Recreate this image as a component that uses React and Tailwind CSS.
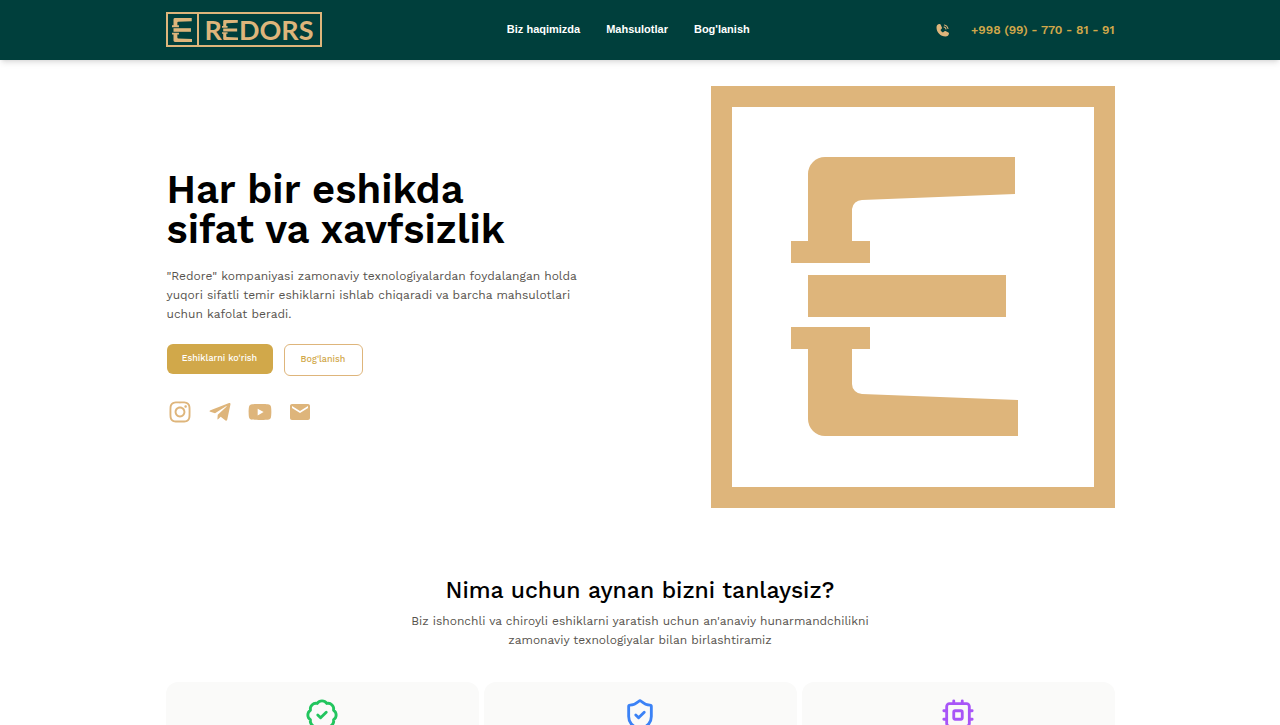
import React from "react";
import { BadgeCheck, ShieldCheck } from "lucide-react";
import { FaInstagram, FaTelegramPlane, FaYoutube } from "react-icons/fa";
import { MdEmail } from "react-icons/md";
import { PiPhoneCallFill } from "react-icons/pi";

function ClampMark(props) {
  return (
    <svg viewBox="80 70 227 280" fill="currentColor" aria-hidden="true" {...props}>
      <path d="M80 155h17V88a17 17 0 0 1 17-17H304v37L151 114a10 10 0 0 0-10 9v32h18v22H80Z" />
      <path d="M97 189h198v42H97Z" />
      <path d="M80 241h79v22h-18v35a10 10 0 0 0 10 10L307 314V350H114a17 17 0 0 1-17-17V263H80Z" />
    </svg>
  );
}

function Logo() {
  return (
    <a
      href="#"
      aria-label="Redors"
      className="flex h-[35px] w-[156px] border-2 border-[#deb57b] text-[#deb57b]"
    >
      <span className="flex w-[31px] items-center justify-center border-r-2 border-[#deb57b]">
        <ClampMark className="h-6 w-5" preserveAspectRatio="none" />
      </span>
      <span className="flex flex-1 items-center justify-center font-['Lato',sans-serif] text-[27px] leading-none font-bold">
        R
        <ClampMark className="mr-px h-5 w-4" preserveAspectRatio="none" />
        DORS
      </span>
    </a>
  );
}

function CpuIcon(props) {
  return (
    <svg
      viewBox="0 0 24 24"
      fill="none"
      stroke="currentColor"
      strokeWidth="2"
      strokeLinecap="round"
      strokeLinejoin="round"
      aria-hidden="true"
      {...props}
    >
      <rect x="4" y="4" width="16" height="16" rx="2" />
      <rect x="9" y="9" width="6" height="6" rx="1" />
      <path d="M15 2v2M15 20v2M2 15h2M2 9h2M20 15h2M20 9h2M9 2v2M9 20v2" />
    </svg>
  );
}

const links = ["Biz haqimizda", "Mahsulotlar", "Bog'lanish"];

const socials = [
  { label: "Instagram", Icon: FaInstagram },
  { label: "Telegram", Icon: FaTelegramPlane },
  { label: "YouTube", Icon: FaYoutube },
  { label: "Email", Icon: MdEmail },
];

const features = [
  { Icon: BadgeCheck, color: "text-[#22c55e]" },
  { Icon: ShieldCheck, color: "text-[#3b82f6]" },
  { Icon: CpuIcon, color: "text-[#a855f7]" },
];

export default function App() {
  return (
    <div className="bg-white font-['Work_Sans','Inter',sans-serif] text-black">
      <header className="bg-[#003f3c] pb-px shadow-md">
        <div className="mx-auto flex h-[59px] max-w-[949px] items-center justify-between">
          <Logo />
          <nav className="flex gap-[26px] font-['Liberation_Sans',Arial,sans-serif] text-[11px] font-bold text-white">
            {links.map((l) => (
              <a key={l} href="#">
                {l}
              </a>
            ))}
          </nav>
          <a href="tel:+998997708191" className="flex items-center gap-5 text-[12px] font-semibold text-[#d1a84a]">
            <PiPhoneCallFill className="size-4 text-[#deb57b]" />
            +998 (99) - 770 - 81 - 91
          </a>
        </div>
      </header>

      <main className="mx-auto max-w-[949px]">
        <section className="flex items-center justify-between pt-[26px]">
          <div className="w-[430px] pl-px">
            <h1 className="text-[40px] leading-10 font-semibold">
              Har bir eshikda
              <br />
              sifat va xavfsizlik
            </h1>
            <p className="mt-[17px] text-[12px] leading-[19px] text-[#57534e]">
              "Redore" kompaniyasi zamonaviy texnologiyalardan foydalangan holda
              <br />
              yuqori sifatli temir eshiklarni ishlab chiqaradi va barcha mahsulotlari
              <br />
              uchun kafolat beradi.
            </p>
            <div className="mt-5 flex items-start gap-[11px] text-[9px] font-medium">
              <button className="h-[30px] w-[106px] rounded-md bg-[#d1a84a] text-white">Eshiklarni ko'rish</button>
              <button className="h-8 w-[79px] rounded-md border border-[#deb57b] text-[#d1a84a]">Bog'lanish</button>
            </div>
            <div className="mt-6 flex gap-4 pl-px text-[#deb57b]">
              {socials.map(({ label, Icon }) => (
                <a key={label} href="#" aria-label={label}>
                  <Icon className="size-6" />
                </a>
              ))}
            </div>
          </div>
          <div className="flex h-[422px] w-[404px] border-[21px] border-[#deb57b] pt-[49px] pl-[59px] text-[#deb57b]">
            <ClampMark className="h-[280px] w-[227px]" />
          </div>
        </section>

        <section className="pt-[67px] text-center">
          <h2 className="text-[23px] leading-8 font-medium">Nima uchun aynan bizni tanlaysiz?</h2>
          <p className="mt-[5px] text-[12px] leading-[19px] text-[#57534e]">
            Biz ishonchli va chiroyli eshiklarni yaratish uchun an'anaviy hunarmandchilikni
            <br />
            zamonaviy texnologiyalar bilan birlashtiramiz
          </p>
          <div className="mt-8 grid grid-cols-3 gap-[5px]">
            {features.map(({ Icon, color }) => (
              <div key={color} className="flex justify-center rounded-xl bg-[#fafaf9] py-4">
                <Icon className={`size-[34px] ${color}`} />
              </div>
            ))}
          </div>
        </section>
      </main>
    </div>
  );
}
